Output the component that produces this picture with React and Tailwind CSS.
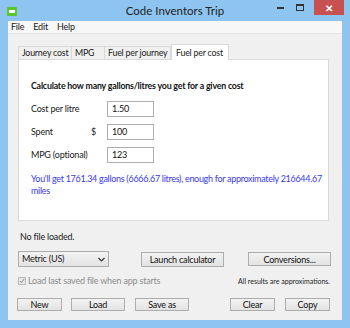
import React from 'react';

const font = { fontFamily: 'Lato, "Open Sans", sans-serif' };

const Btn = ({ children, className = '' }) => (
  <button className={`border border-[#adadad] bg-gradient-to-b from-[#f2f2f2] to-[#e3e3e3] text-[9px] tracking-[-0.2px] leading-[11px] text-[#111] flex items-center justify-center whitespace-nowrap ${className}`}>
    {children}
  </button>
);

const Field = ({ value }) => (
  <div className="w-[47px] h-[16px] border border-[#abadb3] bg-white text-[9px] leading-[14px] pl-[4px] text-[#111]">{value}</div>
);

const tab = 'h-[13px] border border-[#d9d9d9] border-b-0 bg-[#f0f0f0] text-[8.8px] leading-[12px] pl-[3px] flex items-center overflow-hidden';

export default function App() {
  return (
    <div style={font} className="w-[350px] h-[328px] bg-[#8ec4f0] flex flex-col overflow-hidden text-[#1a1a1a] whitespace-nowrap tracking-[-0.2px]">
      {/* title bar */}
      <div className="h-[21px] flex items-start relative">
        <div className="ml-[7px] mt-[7px] w-[10px] h-[9px] bg-[#5cc42e] rounded-[1px] flex items-center justify-center">
          <div className="w-[6px] h-[3px] bg-white"></div>
        </div>
        <div className="absolute left-0 right-0 top-[2px] text-center text-[11.5px] tracking-normal leading-[18px] text-[#222]">Code Inventors Trip</div>
        <div className="ml-auto flex items-start">
          <div className="w-[16px] h-[14px] flex items-center justify-center mr-[4px]">
            <div className="w-[7px] h-[2px] bg-[#333] mt-[2px]"></div>
          </div>
          <div className="w-[16px] h-[14px] flex items-center justify-center mr-[6px]">
            <div className="w-[8px] h-[7px] border border-[#333] border-t-2"></div>
          </div>
          <div className="w-[30px] h-[15px] bg-[#c75050] flex items-center justify-center text-white text-[10px] font-bold leading-none mr-[6px]">✕</div>
        </div>
      </div>

      {/* client */}
      <div className="mx-[8px] mb-[8px] flex-1 bg-[#f0f0f0] flex flex-col">
        {/* menu */}
        <div className="h-[13px] bg-[#f7f7f7] border-b border-[#e5e5e5] flex items-center text-[9px] leading-[12px] pl-[3px] gap-[9px]">
          <span>File</span>
          <span>Edit</span>
          <span>Help</span>
        </div>

        {/* tabs */}
        <div className="ml-[10px] mt-[10px] flex items-end h-[15px] relative z-10">
          <div className={`w-[54px] ${tab}`}>Journey cost</div>
          <div className={`w-[33px] border-l-0 ${tab}`}>MPG</div>
          <div className={`w-[66px] border-l-0 ${tab}`}>Fuel per journey</div>
          <div className="w-[58px] h-[16px] border border-[#d9d9d9] border-b-0 bg-white text-[8.8px] leading-[12px] pl-[4px] flex items-center -mb-[1px]">Fuel per cost</div>
        </div>
        <div className="ml-[10px] w-[311px] h-[162px] bg-white border border-[#d9d9d9] pl-[12px] pt-[20px]">
          <div className="text-[8.8px] leading-[12px] font-bold text-[#111]">Calculate how many gallons/litres you get for a given cost</div>
          <div className="mt-[9px] flex items-center h-[16px] text-[9px]">
            <span className="w-[76px]">Cost per litre</span>
            <Field value="1.50" />
          </div>
          <div className="mt-[7px] flex items-center h-[16px] text-[9px]">
            <span className="w-[60px]">Spent</span>
            <span className="w-[16px]">$</span>
            <Field value="100" />
          </div>
          <div className="mt-[7px] flex items-center h-[16px] text-[9px]">
            <span className="w-[76px]">MPG (optional)</span>
            <Field value="123" />
          </div>
          <div className="mt-[10px] w-[296px] whitespace-normal text-[9px] tracking-[-0.3px] leading-[12px] text-[#3a3ae8]">
            You'll get 1761.34 gallons (6666.67 litres), enough for approximately 216644.67 miles
          </div>
        </div>

        <div className="ml-[12px] mt-[10px] text-[9px] leading-[12px]">No file loaded.</div>

        <div className="ml-[10px] mt-[8px] flex items-center h-[16px]">
          <div className="w-[91px] h-[16px] border border-[#acacac] bg-gradient-to-b from-[#f2f2f2] to-[#e3e3e3] flex items-center justify-between px-[3px] text-[9px]">
            <span>Metric (US)</span>
            <svg width="7" height="5" viewBox="0 0 7 5"><path d="M0.5 1 L3.5 4 L6.5 1" fill="none" stroke="#333" strokeWidth="1.2" /></svg>
          </div>
          <Btn className="ml-[32px] w-[83px] h-[15px]">Launch calculator</Btn>
          <Btn className="ml-[24px] w-[83px] h-[14px]">Conversions...</Btn>
        </div>

        <div className="ml-[10px] mt-[8px] flex items-center h-[12px]">
          <div className="w-[8px] h-[8px] border border-[#bcbcbc] bg-[#e6e6e6] flex items-center justify-center">
            <svg width="6" height="6" viewBox="0 0 6 6"><path d="M0.8 3 L2.4 4.6 L5.2 1" fill="none" stroke="#8a8a8a" strokeWidth="1" /></svg>
          </div>
          <span className="ml-[2px] text-[9px] text-[#8d8d8d]">Load last saved file when app starts</span>
          <span className="ml-auto mr-[12px] text-[7px] tracking-normal text-[#222]">All results are approximations.</span>
        </div>

        <div className="ml-[9px] mt-[11px] flex items-center h-[13px]">
          <Btn className="w-[45px] h-[13px]">New</Btn>
          <Btn className="ml-[9px] w-[54px] h-[13px]">Load</Btn>
          <Btn className="ml-[10px] w-[54px] h-[13px]">Save as</Btn>
          <Btn className="ml-[41px] w-[45px] h-[13px]">Clear</Btn>
          <Btn className="ml-[10px] w-[45px] h-[13px]">Copy</Btn>
        </div>
      </div>
    </div>
  );
}
